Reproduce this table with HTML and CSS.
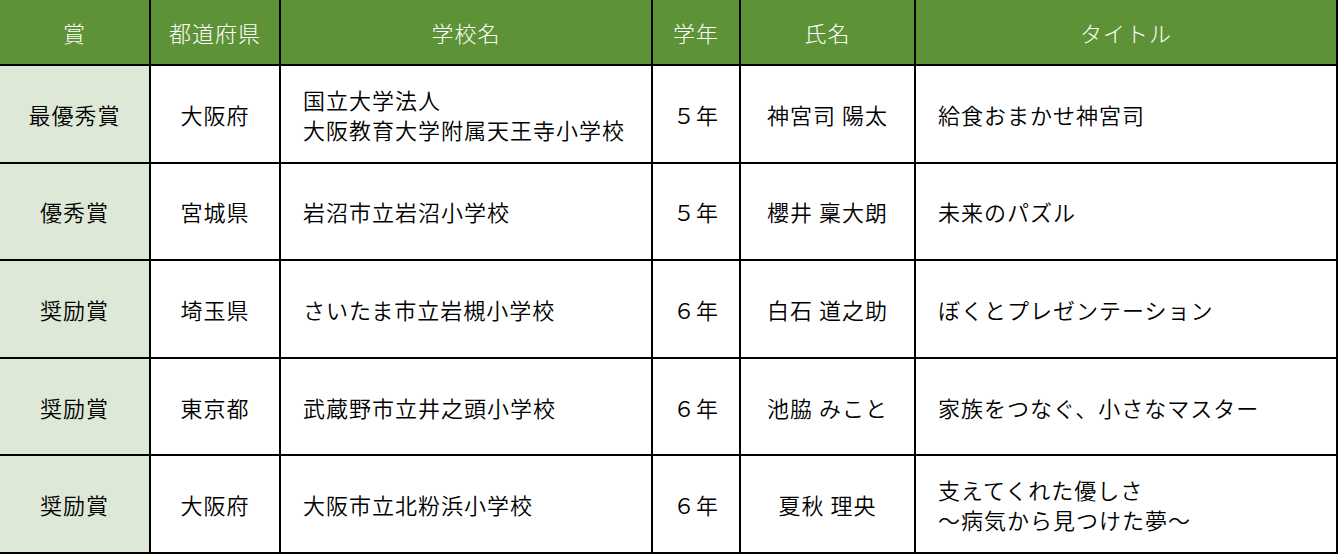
FILE: index.html
```html
<!DOCTYPE html>
<html lang="ja">
<head>
<meta charset="utf-8">
<link rel="stylesheet" href="styles.css">
</head>
<body>
<div class="table">
  <div class="cell head">賞</div>
  <div class="cell head">都道府県</div>
  <div class="cell head">学校名</div>
  <div class="cell head">学年</div>
  <div class="cell head">氏名</div>
  <div class="cell head">タイトル</div>

  <div class="cell award">最優秀賞</div>
  <div class="cell">大阪府</div>
  <div class="cell left">国立大学法人<br>大阪教育大学附属天王寺小学校</div>
  <div class="cell">５年</div>
  <div class="cell">神宮司 陽太</div>
  <div class="cell left">給食おまかせ神宮司</div>

  <div class="cell award">優秀賞</div>
  <div class="cell">宮城県</div>
  <div class="cell left">岩沼市立岩沼小学校</div>
  <div class="cell">５年</div>
  <div class="cell">櫻井 稟大朗</div>
  <div class="cell left">未来のパズル</div>

  <div class="cell award">奨励賞</div>
  <div class="cell">埼玉県</div>
  <div class="cell left">さいたま市立岩槻小学校</div>
  <div class="cell">６年</div>
  <div class="cell">白石 道之助</div>
  <div class="cell left">ぼくとプレゼンテーション</div>

  <div class="cell award">奨励賞</div>
  <div class="cell">東京都</div>
  <div class="cell left">武蔵野市立井之頭小学校</div>
  <div class="cell">６年</div>
  <div class="cell">池脇 みこと</div>
  <div class="cell left">家族をつなぐ、小さなマスター</div>

  <div class="cell award">奨励賞</div>
  <div class="cell">大阪府</div>
  <div class="cell left">大阪市立北粉浜小学校</div>
  <div class="cell">６年</div>
  <div class="cell">夏秋 理央</div>
  <div class="cell left">支えてくれた優しさ<br>～病気から見つけた夢～</div>
</div>
</body>
</html>
```

FILE: styles.css
```css
html, body {
  margin: 0;
  padding: 0;
  background: #ffffff;
}

body {
  font-family: "Noto Sans CJK JP", "Noto Sans", sans-serif;
  color: #000000;
}

.table {
  box-sizing: border-box;
  width: 1338px;
  height: 554px;
  padding: 0 2px 2px 0;
  background: #000000;
  display: grid;
  grid-template-columns: 149px 128px 370px 86px 173px 420px;
  grid-template-rows: 64px repeat(5, 1fr);
  gap: 2px;
}

.cell {
  background: #ffffff;
  display: flex;
  align-items: center;
  justify-content: center;
  text-align: center;
  font-size: 22px;
  letter-spacing: 1px;
  line-height: 30px;
  font-weight: 350;
}

.head {
  background: #5e9236;
  color: #ffffff;
  font-weight: 300;
}

.award {
  background: #dee8d6;
}

.left {
  justify-content: flex-start;
  text-align: left;
  padding-left: 22px;
}
```
